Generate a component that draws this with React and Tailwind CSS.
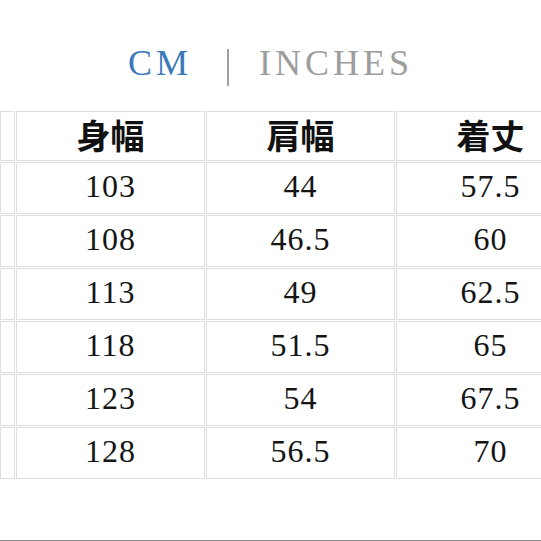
import React from "react";

const headers = ["", "身幅", "肩幅", "着丈"];
const rows = [
  ["", "103", "44", "57.5"],
  ["", "108", "46.5", "60"],
  ["", "113", "49", "62.5"],
  ["", "118", "51.5", "65"],
  ["", "123", "54", "67.5"],
  ["", "128", "56.5", "70"],
];

const serif = { fontFamily: '"Liberation Serif", "Times New Roman", serif' };

export default function App() {
  return (
    <div className="w-[541px] h-[541px] bg-white overflow-hidden border-b border-[#8c8c8c]">
      {/* unit tabs */}
      <div className="flex items-center justify-center pt-[45px] h-[81px]" style={serif}>
        <span className="text-[36px] leading-none tracking-[4px] text-[#3b79bb]">CM</span>
        <span className="w-[2px] h-[37px] bg-[#a0a0a0] ml-[35px] mr-[30px] mt-[8px]"></span>
        <span className="text-[36px] leading-none tracking-[4px] text-[#9d9d9d]">INCHES</span>
      </div>

      {/* size table */}
      <div className="mt-[30px] grid grid-cols-[15px_189px_189px_189px] gap-[1px]">
        {headers.map((h, i) => (
          <div
            key={"h" + i}
            className="h-[50px] pb-[3px] border border-[#dedede] flex items-center justify-center text-[34px] font-bold leading-none text-[#111]"
            style={{ fontFamily: '"Noto Sans CJK JP", "Noto Sans CJK SC", sans-serif' }}
          >
            {h}
          </div>
        ))}
        {rows.map((r, ri) =>
          r.map((c, ci) => (
            <div
              key={ri + "-" + ci}
              className="h-[52px] pb-[4px] border border-[#dedede] flex items-center justify-center text-[32px] leading-none tracking-[1px] text-[#151515]"
              style={serif}
            >
              {c}
            </div>
          ))
        )}
      </div>
    </div>
  );
}
